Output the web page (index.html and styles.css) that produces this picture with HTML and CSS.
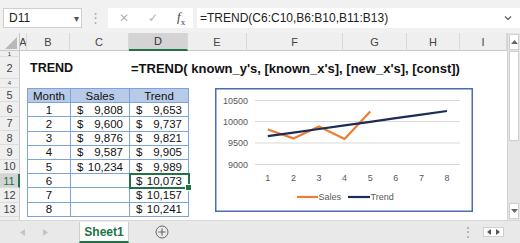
FILE: index.html
```html
<!DOCTYPE html>
<html lang="en">
<head>
    <meta charset="UTF-8">
    <title>TREND</title>
    <link rel="stylesheet" href="styles.css">
</head>
<body>
    <div class="app">
        <div class="formula-bar">
            <div class="name-box"><span>D11</span><span class="caret">&#9662;</span></div>
            <div class="grip">&#8942;</div>
            <div class="fx-tools">
                <span class="x">&#10005;</span>
                <span class="ok">&#10003;</span>
                <span class="fx"><i>f</i><sub>x</sub></span>
            </div>
            <div class="formula">
                <span>=TREND(C6:C10,B6:B10,B11:B13)</span>
                <svg class="chev" width="8" height="6" viewBox="0 0 8 6"><path d="M1 1.5 L4 4.5 L7 1.5" fill="none" stroke="#555" stroke-width="1.2"/></svg>
            </div>
        </div>

        <div class="sheet">
            <div class="corner">
                <svg width="20" height="18" viewBox="0 0 20 18"><polygon points="17,4 17,16 5,16" fill="#b9b9b9"/></svg>
            </div>
            <div class="col-h">A</div>
            <div class="col-h">B</div>
            <div class="col-h">C</div>
            <div class="col-h active">D</div>
            <div class="col-h">E</div>
            <div class="col-h">F</div>
            <div class="col-h">G</div>
            <div class="col-h">H</div>
            <div class="col-h">I</div>

            <div class="scroll-v">
                <div class="sb-btn"><svg width="7" height="4" viewBox="0 0 7 4"><polygon points="0,4 7,4 3.5,0" fill="#666"/></svg></div>
                <div class="sb-thumb"></div>
                <div class="sb-track"></div>
                <div class="sb-btn"><svg width="7" height="4" viewBox="0 0 7 4"><polygon points="0,0 7,0 3.5,4" fill="#666"/></svg></div>
            </div>

            <div class="row-h r1"><span>1</span></div>
            <div class="row-h r2">2</div>
            <div class="row-h r3"><span>4</span></div>
            <div class="row-h r4">5</div>
            <div class="row-h r5">6</div>
            <div class="row-h r6">7</div>
            <div class="row-h r7">8</div>
            <div class="row-h r8">9</div>
            <div class="row-h r9">10</div>
            <div class="row-h r10 active">11</div>
            <div class="row-h r11">12</div>
            <div class="row-h r12">13</div>
            <div class="row-h r13"></div>

            <div class="title">TREND</div>
            <div class="syntax">=TREND( known_y's, [known_x's], [new_x's], [const])</div>

            <table class="data">
                <colgroup><col class="cb"><col class="cc"><col class="cd"></colgroup>
                <tr class="head"><td>Month</td><td>Sales</td><td>Trend</td></tr>
                <tr><td>1</td><td><div class="money"><span>$</span><span>9,808</span></div></td><td><div class="money"><span>$</span><span>9,653</span></div></td></tr>
                <tr><td>2</td><td><div class="money"><span>$</span><span>9,600</span></div></td><td><div class="money"><span>$</span><span>9,737</span></div></td></tr>
                <tr><td>3</td><td><div class="money"><span>$</span><span>9,876</span></div></td><td><div class="money"><span>$</span><span>9,821</span></div></td></tr>
                <tr><td>4</td><td><div class="money"><span>$</span><span>9,587</span></div></td><td><div class="money"><span>$</span><span>9,905</span></div></td></tr>
                <tr><td>5</td><td><div class="money"><span>$</span><span>10,234</span></div></td><td><div class="money"><span>$</span><span>9,989</span></div></td></tr>
                <tr><td>6</td><td></td><td class="sel"><div class="money"><span>$</span><span>10,073</span></div></td></tr>
                <tr><td>7</td><td></td><td><div class="money"><span>$</span><span>10,157</span></div></td></tr>
                <tr><td>8</td><td></td><td><div class="money"><span>$</span><span>10,241</span></div></td></tr>
            </table>

            <svg class="chart" width="258" height="124" viewBox="0 0 258 124">
                <rect x="0.75" y="0.75" width="256.5" height="122.5" fill="#fff" stroke="#4a6cb3" stroke-width="1.5"/>
                <g stroke="#d9d9d9" stroke-width="1">
                    <line x1="40" y1="12.5" x2="245" y2="12.5"/>
                    <line x1="40" y1="33.5" x2="245" y2="33.5"/>
                    <line x1="40" y1="55" x2="245" y2="55"/>
                    <line x1="40" y1="76.5" x2="245" y2="76.5"/>
                </g>
                <g class="axis" text-anchor="end">
                    <text x="33" y="15.5">10500</text>
                    <text x="33" y="37">10000</text>
                    <text x="33" y="58">9500</text>
                    <text x="33" y="79.5">9000</text>
                </g>
                <g class="axis" text-anchor="middle">
                    <text x="52.8" y="92.5">1</text>
                    <text x="78.4" y="92.5">2</text>
                    <text x="104" y="92.5">3</text>
                    <text x="129.6" y="92.5">4</text>
                    <text x="155.2" y="92.5">5</text>
                    <text x="180.8" y="92.5">6</text>
                    <text x="206.4" y="92.5">7</text>
                    <text x="232" y="92.5">8</text>
                </g>
                <polyline points="52.8,41.5 78.4,50.4 104,38.6 129.6,51 155.2,23.4" fill="none" stroke="#ed7d31" stroke-width="2.2" stroke-linejoin="round"/>
                <polyline points="52.8,48.1 78.4,44.6 104,41 129.6,37.4 155.2,33.8 180.8,30.2 206.4,26.6 232,23" fill="none" stroke="#1c2b57" stroke-width="2.2" stroke-linejoin="round"/>
                <line x1="82" y1="109" x2="103" y2="109" stroke="#ed7d31" stroke-width="2.2"/>
                <text class="axis" x="103.5" y="112">Sales</text>
                <line x1="133" y1="109" x2="155" y2="109" stroke="#1c2b57" stroke-width="2.2"/>
                <text class="axis" x="155.5" y="112">Trend</text>
            </svg>
        </div>

        <div class="tabs">
            <div class="nav">
                <svg width="5" height="7" viewBox="0 0 5 7"><polygon points="5,0 5,7 0,3.5" fill="#c4c4c4"/></svg>
                <svg width="5" height="7" viewBox="0 0 5 7"><polygon points="0,0 0,7 5,3.5" fill="#c4c4c4"/></svg>
            </div>
            <div class="tab">Sheet1</div>
            <div class="add">
                <svg width="14" height="14" viewBox="0 0 14 14"><circle cx="7" cy="7" r="6" fill="none" stroke="#666" stroke-width="1"/><path d="M7 3.5 V10.5 M3.5 7 H10.5" stroke="#666" stroke-width="1.1"/></svg>
            </div>
            <div class="spacer"></div>
            <div class="dots">&#8942;</div>
            <div class="hscroll">
                <svg width="4" height="6" viewBox="0 0 4 6"><polygon points="4,0 4,6 0,3" fill="#555"/></svg>
                <svg width="4" height="6" viewBox="0 0 4 6"><polygon points="0,0 0,6 4,3" fill="#555"/></svg>
            </div>
        </div>
    </div>
</body>
</html>
```

FILE: styles.css
```css
body {
    margin: 0;
    font-family: "Liberation Sans", Arial, sans-serif;
}

.app {
    width: 520px;
    height: 243px;
    overflow: hidden;
    background: #fff;
}

/* formula bar */
.formula-bar {
    height: 33px;
    box-sizing: border-box;
    padding: 8px 0 0 3px;
    background: #f1f1f1;
    display: flex;
    align-items: flex-start;
}

.name-box {
    width: 79px;
    height: 20px;
    box-sizing: border-box;
    border: 1px solid #cfcfcf;
    background: #fff;
    display: flex;
    align-items: center;
    justify-content: space-between;
    padding: 0 2px 0 5px;
    font-size: 12px;
    color: #222;
}

.name-box .caret {
    font-size: 10px;
    color: #555;
}

.grip {
    width: 26px;
    height: 20px;
    line-height: 20px;
    text-align: center;
    color: #aaa;
    font-size: 13px;
}

.fx-tools {
    width: 85px;
    height: 20px;
    background: #fff;
    display: flex;
    align-items: center;
    color: #b5b5b5;
    font-size: 12px;
}

.fx-tools .x { margin-left: 11px; }
.fx-tools .ok { margin-left: 19px; }

.fx-tools .fx {
    margin-left: 19px;
    color: #444;
    font-family: "Liberation Serif", serif;
    font-size: 13px;
}

.fx-tools .fx sub {
    font-size: 9px;
}

.formula {
    flex: 1;
    height: 20px;
    margin-left: 4px;
    background: #fff;
    display: flex;
    align-items: center;
    justify-content: space-between;
    padding: 0 8px 0 3px;
    font-size: 12px;
    color: #222;
}

/* grid */
.sheet {
    position: relative;
    height: 187px;
    display: grid;
    grid-template-columns: 20px 7px 43px 59px 59px 59px 96px 64px 53px 47px 13px;
    grid-template-rows: 18px 6px 22px 9px repeat(9, 14.33px) 3px;
}

.corner {
    grid-column: 1;
    grid-row: 1;
    background: #efefef;
    border-bottom: 1px solid #c9c9c9;
    border-right: 1px solid #c9c9c9;
    box-sizing: border-box;
    overflow: hidden;
}

.col-h {
    grid-row: 1;
    background: #efefef;
    border-bottom: 1px solid #c9c9c9;
    border-right: 1px solid #d8d8d8;
    box-sizing: border-box;
    display: flex;
    align-items: center;
    justify-content: center;
    overflow: hidden;
    font-size: 11px;
    color: #444;
}

.col-h.active {
    background: #d4d4d4;
    border-bottom: 2px solid #217346;
    color: #333;
}

.row-h {
    grid-column: 1;
    background: #efefef;
    border-right: 1px solid #c9c9c9;
    border-bottom: 1px solid #dcdcdc;
    box-sizing: border-box;
    display: flex;
    align-items: center;
    justify-content: center;
    overflow: hidden;
    font-size: 11px;
    color: #444;
}

.row-h.active {
    background: #d4d4d4;
    border-right: 2px solid #217346;
    color: #217346;
}

/* rows 1 and 4 are squeezed, only a sliver of the number shows */
.r1 span,
.r3 span {
    font-size: 6px;
    line-height: 6px;
}

.r1 { grid-row: 2; }
.r2 { grid-row: 3; }
.r3 { grid-row: 4; }
.r4 { grid-row: 5; }
.r5 { grid-row: 6; }
.r6 { grid-row: 7; }
.r7 { grid-row: 8; }
.r8 { grid-row: 9; }
.r9 { grid-row: 10; }
.r10 { grid-row: 11; }
.r11 { grid-row: 12; }
.r12 { grid-row: 13; }
.r13 { grid-row: 14; border-bottom: none; }

.scroll-v {
    grid-column: 11;
    grid-row: 1 / -1;
    display: flex;
    flex-direction: column;
    background: #e6e6e6;
    border-left: 1px solid #d2d2d2;
}

.sb-btn {
    height: 14px;
    background: #fff;
    border: 1px solid #cfcfcf;
    margin: 1px;
    display: flex;
    align-items: center;
    justify-content: center;
}

.sb-thumb {
    height: 88px;
    background: #fff;
    border: 1px solid #cfcfcf;
    margin: 0 1px;
}

.sb-track {
    flex: 1;
}

.title {
    grid-column: 3 / 5;
    grid-row: 3;
    align-self: center;
    padding-left: 3px;
    font-size: 12.5px;
    font-weight: bold;
    white-space: nowrap;
    color: #111;
}

.syntax {
    grid-column: 5 / 11;
    grid-row: 3;
    align-self: center;
    padding-left: 2px;
    font-size: 13px;
    font-weight: bold;
    white-space: nowrap;
    color: #111;
}

/* data table */
.data {
    grid-column: 3 / 6;
    grid-row: 5 / 14;
    width: 100%;
    height: 100%;
    table-layout: fixed;
    border-collapse: collapse;
    font-size: 11.5px;
    color: #111;
}

.data .cb { width: 43px; }
.data .cc { width: 59px; }
.data .cd { width: 59px; }

.data td {
    border: 1px solid #7da3db;
    padding: 0;
    text-align: center;
    height: 12px;
    line-height: 12px;
}

.data tr.head td {
    background: #b7cbe8;
}

.money {
    display: flex;
    justify-content: space-between;
    padding: 0 6px 0 6px;
}

.data td.sel {
    position: relative;
    outline: 2px solid #217346;
    outline-offset: -1px;
}

.data td.sel::after {
    content: "";
    position: absolute;
    right: -4px;
    bottom: -4px;
    width: 5px;
    height: 5px;
    background: #217346;
    border: 1px solid #fff;
}

.chart {
    position: absolute;
    left: 215px;
    top: 55px;
}

.chart .axis {
    font-family: "Liberation Sans", Arial, sans-serif;
    font-size: 9px;
    fill: #595959;
}

/* sheet tabs */
.tabs {
    height: 23px;
    background: #e9e9e9;
    display: flex;
    align-items: stretch;
    border-top: 1px solid #d6d6d6;
    box-sizing: border-box;
}

.nav {
    width: 79px;
    display: flex;
    align-items: center;
    gap: 18px;
    padding-left: 20px;
    box-sizing: border-box;
}

.tab {
    width: 50px;
    margin-top: 1px;
    background: #fff;
    border-left: 1px solid #cfcfcf;
    border-right: 1px solid #cfcfcf;
    border-bottom: 2px solid #217346;
    box-sizing: border-box;
    display: flex;
    align-items: center;
    justify-content: center;
    font-size: 12px;
    font-weight: bold;
    color: #217346;
}

.add {
    margin-left: 26px;
    display: flex;
    align-items: center;
}

.spacer {
    flex: 1;
}

.dots {
    color: #999;
    font-size: 12px;
    display: flex;
    align-items: center;
    margin-right: 9px;
}

.hscroll {
    align-self: center;
    width: 21px;
    height: 10px;
    margin-right: 16px;
    display: flex;
    align-items: center;
    justify-content: space-around;
    background: #fff;
    border: 1px solid #cfcfcf;
    box-sizing: border-box;
}
```
